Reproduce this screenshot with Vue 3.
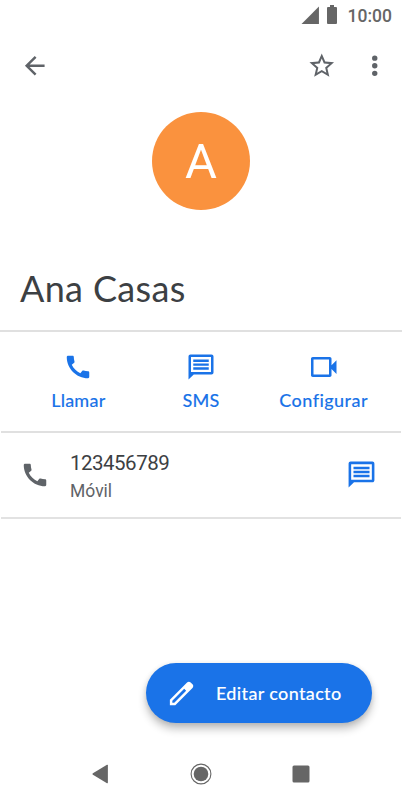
<template>
  <div class="screen">
    <div class="status-bar">
      <svg class="signal" viewBox="0 0 18 18"><path d="M17 .5V17H.5z" /></svg>
      <svg class="battery" viewBox="0 0 10 19">
        <path d="M3 0h4v2h2q1 0 1 1v15q0 1-1 1H1q-1 0-1-1V3q0-1 1-1h2z" />
      </svg>
      <span class="clock">10:00</span>
    </div>

    <header class="toolbar">
      <button class="icon-button" aria-label="Atrás">
        <svg viewBox="0 0 24 24"><path :d="icons.back" /></svg>
      </button>
      <div class="toolbar-actions">
        <button class="icon-button" aria-label="Favorito">
          <svg viewBox="0 0 24 24"><path :d="icons.star" /></svg>
        </button>
        <button class="icon-button" aria-label="Más opciones">
          <svg viewBox="0 0 24 24"><path :d="icons.more" /></svg>
        </button>
      </div>
    </header>

    <div class="avatar">{{ initial }}</div>
    <h1 class="name"><span>{{ contact.name }}</span></h1>

    <!-- Quick actions -->
    <div class="actions">
      <button v-for="action in actions" :key="action.label" class="action" :class="action.icon">
        <svg viewBox="0 0 24 24"><path :d="icons[action.icon]" /></svg>
        <span>{{ action.label }}</span>
      </button>
    </div>

    <!-- Phone number -->
    <div class="phone-row">
      <svg class="row-icon" viewBox="0 0 24 24"><path :d="icons.phone" /></svg>
      <div class="phone-text">
        <span class="number">{{ contact.phone }}</span>
        <span class="type">{{ contact.type }}</span>
      </div>
      <svg class="row-sms" viewBox="0 0 24 24"><path :d="icons.chat" /></svg>
    </div>

    <div class="bottom">
      <button class="edit-button">
        <svg viewBox="0 0 24 24"><path :d="icons.edit" /></svg>
        <span>Editar contacto</span>
      </button>
    </div>

    <nav class="nav-bar">
      <svg viewBox="0 0 24 24"><path d="M3.9 11.3 18 2.8q.9-.4.9.6v17.2q0 1-.9.6L3.9 12.7q-1-.7 0-1.4z" /></svg>
      <svg viewBox="0 0 24 24">
        <circle class="ring" cx="12" cy="12" r="9.9" />
        <circle cx="12" cy="12" r="7.3" />
      </svg>
      <svg viewBox="0 0 24 24"><rect x="3.5" y="3.5" width="17" height="17" rx="1.5" /></svg>
    </nav>
  </div>
</template>

<script setup>
import { computed } from 'vue';

const contact = {
  name: 'Ana Casas',
  phone: '123456789',
  type: 'Móvil',
};

const initial = computed(() => contact.name.charAt(0));

const actions = [
  { label: 'Llamar', icon: 'phone' },
  { label: 'SMS', icon: 'chat' },
  { label: 'Configurar', icon: 'video' },
];

const icons = {
  back: 'M20 11H7.83l5.59-5.59L12 4l-8 8 8 8 1.41-1.41L7.83 13H20v-2z',
  star: 'M22 9.24l-7.19-.62L12 2 9.19 8.63 2 9.24l5.46 4.73L5.82 21 12 17.27 18.18 21l-1.63-7.03L22 9.24zM12 15.4l-3.76 2.27 1-4.28-3.32-2.88 4.38-.38L12 6.1l1.71 4.04 4.38.38-3.32 2.88 1 4.28L12 15.4z',
  more: 'M12 8a2.2 2.2 0 1 0 0-4.4A2.2 2.2 0 0 0 12 8zm0 6.2a2.2 2.2 0 1 0 0-4.4 2.2 2.2 0 0 0 0 4.4zm0 6.2a2.2 2.2 0 1 0 0-4.4 2.2 2.2 0 0 0 0 4.4z',
  phone: 'M20.01 15.38c-1.23 0-2.42-.2-3.53-.56-.35-.12-.74-.03-1.01.24l-1.57 1.97c-2.83-1.35-5.48-3.9-6.89-6.83l1.95-1.66c.27-.28.35-.67.24-1.02-.37-1.11-.56-2.3-.56-3.53 0-.54-.45-.99-.99-.99H4.19C3.65 3 3 3.24 3 3.99 3 13.28 10.73 21 20.01 21c.71 0 .99-.63.99-1.18v-3.45c0-.54-.45-.99-.99-.99z',
  chat: 'M20.4 2H3.6C2.7 2 2 2.7 2 3.6V22l4.2-4H20.4c.9 0 1.6-.7 1.6-1.6V3.6c0-.9-.7-1.6-1.6-1.6zM20 16H4V4h16v12zM5.8 6h12.4v1.9H5.8zM5.8 9.1h12.4v1.9H5.8zM5.8 12.2h12.4v1.9H5.8z',
  video: 'M18 10.5V5.4C18 4.6 17.4 4 16.6 4H3C2.2 4 1.6 4.6 1.6 5.4v13.2c0 .8.6 1.4 1.4 1.4h13.6c.8 0 1.4-.6 1.4-1.4v-5.1l4 4v-11l-4 4zM16 18H3.6V6H16v12z',
  edit: 'M20.5 4.9l-1.4-1.4c-.8-.8-2-.8-2.8 0L3 16.8V21h4.2L20.5 7.7c.8-.8.8-2 0-2.8zM6.4 19.1H4.9v-1.5l9.2-9.2 1.5 1.5-9.2 9.2z',
};
</script>

<style>
body {
  background: #fff;
}
</style>

<style scoped>
.screen {
  display: flex;
  flex-direction: column;
  width: 402px;
  height: 804px;
  overflow: hidden;
  background: #fff;
  color: #3c4043;
  font-family: Roboto, sans-serif;
}

button {
  padding: 0;
  border: 0;
  background: none;
  color: inherit;
}

svg {
  display: block;
  flex: none;
  fill: currentColor;
}

.status-bar {
  display: flex;
  justify-content: flex-end;
  align-items: center;
  height: 31px;
  padding-right: 10px;
  color: #666;
}

.signal {
  width: 19px;
  height: 19px;
  margin-right: 7px;
}

.battery {
  width: 10px;
  height: 19px;
  margin: 0 11px 2px 0;
}

.clock {
  padding-top: 1px;
  font-size: 17.5px;
  font-weight: 500;
  line-height: 31px;
}

.toolbar {
  display: flex;
  justify-content: space-between;
  height: 69px;
  padding: 0 13px 0 20px;
  align-items: center;
  color: #5f6368;
}

.toolbar-actions {
  display: flex;
  gap: 23px;
}

.icon-button svg {
  width: 29.5px;
  height: 29.5px;
}

.avatar {
  flex: none;
  width: 98px;
  height: 98px;
  margin: 12px auto 0;
  border-radius: 50%;
  background: #fa923e;
  color: #fff;
  font-size: 49px;
  line-height: 99px;
  text-align: center;
}

.name {
  display: flex;
  align-items: center;
  height: 84px;
  margin: 36px 0 0;
  padding-left: 20px;
  font-family: Lato, sans-serif;
  font-size: 36px;
  font-weight: 400;
  letter-spacing: 0.35px;
}

.actions {
  display: grid;
  grid-template-columns: repeat(3, 1fr);
  height: 99px;
  padding: 0 17px;
  border-top: 2px solid #e0e0e0;
  color: #1a73e8;
}

.action {
  display: flex;
  flex-direction: column;
  align-items: center;
  padding-top: 20px;
  font-family: Lato, sans-serif;
  font-size: 18px;
  font-weight: 500;
  letter-spacing: 0.2px;
  line-height: 24px;
  -webkit-text-stroke: 0.1px currentColor;
}

.action.video {
  letter-spacing: 0.45px;
}

.action svg {
  width: 30px;
  height: 30px;
  margin-bottom: 6px;
}

.phone-row {
  display: flex;
  align-items: center;
  height: 84px;
  margin: 0 1px;
  padding: 0 25px 0 19px;
  border-top: 2px solid #e0e0e0;
  border-bottom: 2px solid #e2e2e2;
}

.row-icon {
  width: 30px;
  height: 30px;
  color: #5f6368;
}

.row-sms {
  width: 31px;
  height: 31px;
  margin: 0 -1px 2px 0;
  color: #1a73e8;
}

.phone-text {
  display: flex;
  flex: 1;
  flex-direction: column;
  gap: 3px;
  padding: 3px 0 0 20px;
}

.number {
  font-size: 20.5px;
  letter-spacing: -0.5px;
  line-height: 26px;
}

.type {
  color: #5f6368;
  font-size: 17.5px;
  line-height: 24px;
}

.bottom {
  display: flex;
  flex: 1;
  align-items: flex-end;
  justify-content: flex-end;
  padding: 0 30px 20px 0;
}

.edit-button {
  display: flex;
  align-items: center;
  width: 226px;
  height: 60px;
  padding-left: 20px;
  border-radius: 30px;
  background: #1a73e8;
  box-shadow: 0 6px 8px rgba(0, 0, 0, 0.24), 0 1px 5px rgba(0, 0, 0, 0.1);
  color: #fff;
  font-family: Lato, sans-serif;
  font-size: 18px;
  font-weight: 500;
  letter-spacing: 0.35px;
  -webkit-text-stroke: 0.1px currentColor;
}

.edit-button svg {
  width: 31px;
  height: 31px;
  margin-right: 19px;
}

.nav-bar {
  display: flex;
  flex: none;
  align-items: center;
  justify-content: space-between;
  height: 61px;
  padding: 0 89px;
  color: #666;
}

.nav-bar svg {
  width: 24px;
  height: 24px;
}

.ring {
  fill: none;
  stroke: currentColor;
  stroke-width: 1.1;
}
</style>
